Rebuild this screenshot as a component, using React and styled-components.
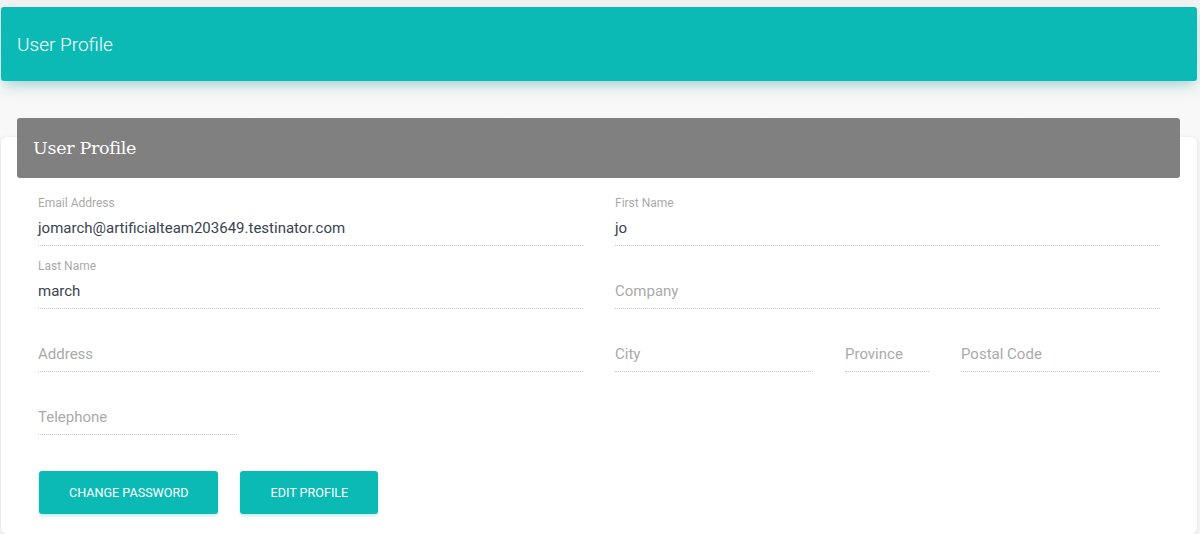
import styled, { createGlobalStyle } from 'styled-components';

const GlobalStyle = createGlobalStyle`
  html, body {
    margin: 0;
    padding: 0;
    background: #f7f7f7;
    font-family: Roboto, "Noto Sans", Arial, sans-serif;
  }
`;

const Page = styled.div`
  padding: 7px 3px 0 1px;
  min-height: 534px;
  box-sizing: border-box;
  background: linear-gradient(#f1f1f1 0, #f8f8f8 120px);
`;

const TopBar = styled.header`
  height: 74px;
  background: #0bbab5;
  border-radius: 3px;
  box-shadow: 0 6px 14px -4px rgba(11, 150, 146, 0.45);
  display: flex;
  align-items: center;
  padding-left: 16px;
  color: #fff;
  font-size: 19px;
  font-weight: 300;
`;

const Card = styled.section`
  margin-top: 56px;
  background: #fff;
  border-radius: 6px;
  box-shadow: 0 1px 4px rgba(0, 0, 0, 0.12);
  padding: 0 37px 20px 37px;
`;

const CardHeader = styled.div`
  margin: 0 -20px -19px -21px;
  position: relative;
  top: -19px;
  height: 60px;
  background: #808080;
  border-radius: 3px;
  display: flex;
  align-items: center;
  padding-left: 16px;
  color: #fff;
  font-family: "DejaVu Serif", "Liberation Serif", serif;
  font-size: 17.5px;
  letter-spacing: -0.3px;
`;

const Fields = styled.div`
  padding-top: 17px;
  display: grid;
  grid-template-columns: 1fr 1fr;
  column-gap: 32px;
  row-gap: 12px;
`;

const Split = styled.div`
  display: grid;
  grid-template-columns: 198px 84px 1fr;
  column-gap: 32px;
`;

const Field = styled.div`
  width: ${(p) => p.$width || 'auto'};
  border-bottom: 1px dotted #c8c8c8;
  padding-bottom: 7px;
`;

const Label = styled.div`
  font-size: 12px;
  line-height: 16px;
  height: 16px;
  color: #aaaaaa;
  margin-bottom: 7px;
`;

const Value = styled.div`
  font-size: 15px;
  line-height: 20px;
  color: ${(p) => (p.$placeholder ? '#aaaaaa' : '#3a4350')};
`;

const Actions = styled.div`
  display: flex;
  gap: 22px;
  margin-top: 36px;
  padding-left: 1px;
`;

const Button = styled.button`
  height: 43px;
  padding: 0 30px;
  border: none;
  border-radius: 3px;
  background: #0bbab5;
  color: #fff;
  font-family: Roboto, Arial, sans-serif;
  font-size: 12.6px;
  font-weight: 400;
  text-transform: uppercase;
  box-shadow: 0 2px 3px rgba(11, 186, 181, 0.25);
  cursor: pointer;
`;

const Input = ({ label, value, placeholder, width }) => (
  <Field $width={width}>
    <Label>{label}</Label>
    <Value $placeholder={!value}>{value || placeholder}</Value>
  </Field>
);

export default function App() {
  return (
    <>
      <GlobalStyle />
      <Page>
        <TopBar>User Profile</TopBar>
        <Card>
          <CardHeader>User Profile</CardHeader>
          <Fields>
            <Input label="Email Address" value="jomarch@artificialteam203649.testinator.com" />
            <Input label="First Name" value="jo" />
            <Input label="Last Name" value="march" />
            <Input placeholder="Company" />
            <Input placeholder="Address" />
            <Split>
              <Input placeholder="City" />
              <Input placeholder="Province" />
              <Input placeholder="Postal Code" />
            </Split>
            <Input placeholder="Telephone" width="199px" />
          </Fields>
          <Actions>
            <Button>Change Password</Button>
            <Button>Edit Profile</Button>
          </Actions>
        </Card>
      </Page>
    </>
  );
}
